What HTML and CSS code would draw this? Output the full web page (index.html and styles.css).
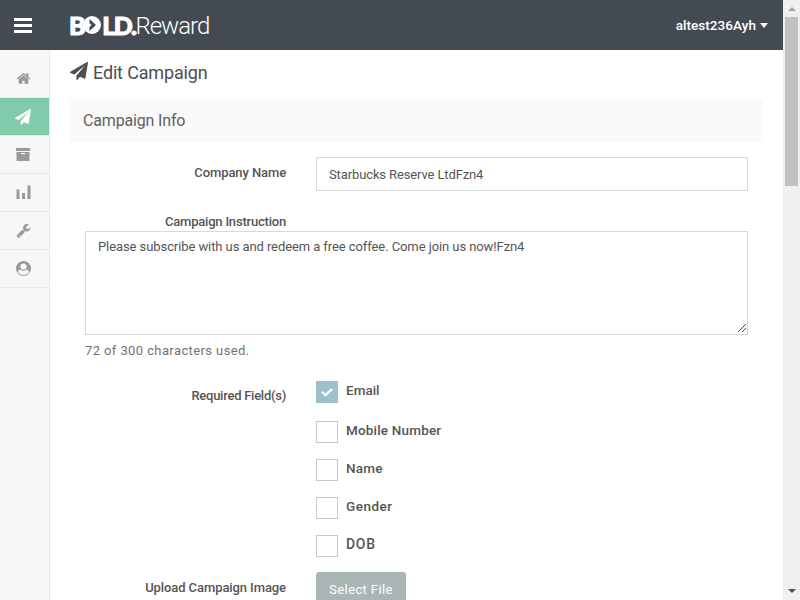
FILE: index.html
```
<!DOCTYPE html>
<html lang="en">
<head>
<meta charset="utf-8">
<title>Edit Campaign</title>
<link rel="stylesheet" href="styles.css">
</head>
<body>
<svg class="defs" width="0" height="0"><symbol id="plane" viewBox="0 0 1792 1792"><path d="M1764 11q33 24 27 64l-256 1536q-5 29-32 45-14 8-31 8-11 0-24-5l-453-185-242 295q-18 23-49 23-13 0-22-4-19-7-30.500-23.500t-11.500-36.500v-349l864-1059-1069 925-395-162q-37-14-40-55-2-40 32-59l1664-960q15-9 32-9 20 0 36 11z"/></symbol></svg>
<div class="app">
  <header class="topbar">
    <div class="burger"><i></i><i></i><i></i></div>
    <div class="logo"><b class="b">B</b><svg class="o" viewBox="0 0 18 18"><circle cx="9" cy="9" r="9" fill="#fff"/><path d="M6.500 3 13 9 6.500 15V11L8.500 9 6.500 7Z" fill="#434a54"/></svg><b class="ld">LD.</b><span>Reward</span></div>
    <div class="user"><span>altest236Ayh</span><i class="caret"></i></div>
  </header>
  <div class="body">
    <nav class="side">
      <a class="first"><svg width="15" height="15" viewBox="0 0 1792 1792"><path d="M1472 992v480q0 26-19 45t-45 19h-384v-384h-256v384h-384q-26 0-45-19t-19-45v-480q0-1 .5-3t.5-3l575-474 575 474q1 2 1 6zm223-69l-62 74q-8 9-21 11h-3q-13 0-21-7l-692-577-692 577q-12 8-24 7-13-2-21-11l-62-74q-8-10-7-23.500t11-21.500l719-599q32-26 76-26t76 26l244 204v-195q0-14 9-23t23-9h192q14 0 23 9t9 23v408l219 182q10 8 11 21.500t-7 23.500z"/></svg></a>
      <a class="active"><svg width="16" height="16"><use href="#plane"/></svg></a>
      <a><svg width="14" height="13" viewBox="0 0 14 13"><path fill-rule="evenodd" d="M0 0h14v3H0zM.5 4h13v9H.5zM5 5v1.300h4V5z"/></svg></a>
      <a><svg width="15" height="15" viewBox="0 0 15 15"><path d="M.5 4.500h3V14h-3zM6 8h3v6H6zM11.500.5h3V14h-3z"/></svg></a>
      <a><svg width="15" height="15" viewBox="0 0 1792 1792"><path d="M448 1472q0-26-19-45t-45-19-45 19-19 45 19 45 45 19 45-19 19-45zm644-420l-682 682q-37 37-90 37-52 0-91-37l-106-108q-38-36-38-90 0-53 38-91l681-681q39 98 114.500 173.500t173.500 114.500zm634-435q0 39-23 106-47 134-164.500 217.500t-258.500 83.500q-185 0-316.500-131.500t-131.500-316.500 131.500-316.500 316.500-131.500q58 0 121.500 16.500t107.500 46.500q16 11 16 28t-16 28l-293 169v224l193 107q5-3 79-48.500t135.500-81 70.500-35.500q15 0 23.500 10t8.500 25z"/></svg></a>
      <a><svg width="15" height="15" viewBox="0 0 15 15"><circle cx="7.500" cy="7.500" r="7.500"/><path fill="#f7f7f7" d="M2 11.200c.4-1.700 1.300-2.600 2.500-2.800a4.200 4.200 0 0 0 6 0c1.200.2 2.100 1.100 2.500 2.800a6.600 6.600 0 0 1-11 0z"/><circle fill="#f7f7f7" cx="7.500" cy="5.600" r="3.100"/></svg></a>
    </nav>
    <main class="content">
      <h1><svg width="18" height="18"><use href="#plane"/></svg><span>Edit Campaign</span></h1>
      <h2>Campaign Info</h2>
      <div class="row company"><label class="lab l1">Company Name</label><div class="input">Starbucks Reserve LtdFzn4</div></div>
      <div class="row"><label class="lab l2">Campaign Instruction</label></div>
      <div class="area"><span>Please subscribe with us and redeem a free coffee. Come join us now!Fzn4</span><svg class="grip" width="9" height="9" viewBox="0 0 9 9" shape-rendering="crispEdges"><path d="M.5 8.500 8.500.5M4.500 8.500l4-4" stroke="#444"/></svg></div>
      <p class="count">72 of 300 characters used.</p>
      <div class="row fields"><label class="lab l3">Required Field(s)</label>
        <div class="checks">
          <div class="check on"><i><svg width="12" height="9" viewBox="0 0 12 9"><path d="M1 3.800 4.500 7.200 11 1" fill="none" stroke="#fff" stroke-width="2.300"/></svg></i><span class="c1">Email</span></div>
          <div class="check"><i></i><span class="c2">Mobile Number</span></div>
          <div class="check"><i></i><span class="c3">Name</span></div>
          <div class="check"><i></i><span class="c4">Gender</span></div>
          <div class="check"><i></i><span class="c5">DOB</span></div>
        </div>
      </div>
      <div class="row upload"><label class="lab l4">Upload Campaign Image</label><div class="btn">Select File</div></div>
    </main>
  </div>
</div>
<div class="scroll"><i class="up"></i><i class="thumb"></i><i class="down"></i></div>
</body>
</html>
```
FILE: styles.css
```
* { box-sizing: border-box; }
html, body { margin: 0; height: 600px; overflow: hidden; }
body { display: flex; background: #fff; color: #555; font: 13px/20px Roboto, "Liberation Sans", sans-serif; }
svg { display: block; fill: currentColor; flex: none; }
.defs { position: absolute; }
.app { width: 783px; height: 600px; overflow: hidden; }
.topbar { height: 50px; background: #434a54; display: flex; align-items: center; color: #fff; padding: 0 15px 0 14px; }
.burger { width: 18px; display: grid; gap: 3px; }
.burger i { height: 3px; background: #fff; }
.logo { display: flex; align-items: center; margin-left: 37px; height: 50px; font: 24px/50px Roboto, sans-serif; white-space: nowrap; }
.logo b { font: 900 25px/50px Lato, Roboto, sans-serif; letter-spacing: -1.300px; -webkit-text-stroke: 1px #fff; }
.logo .b { margin-right: -1px; }
.logo .ld { margin-left: 1px; letter-spacing: -1.500px; }
.logo .o { width: 18px; height: 18px; }
.logo span { font-weight: 300; letter-spacing: -1px; margin-top: 1px; }
.user { margin-left: auto; display: flex; align-items: center; gap: 4px; font-size: 13.500px; font-weight: 500; letter-spacing: .06px; }
.caret { border: 4px solid transparent; border-top: 5px solid #fff; border-bottom: 0; }
.body { display: flex; height: 550px; }
.side { width: 50px; background: #f7f7f7; border-right: 1px solid #e8e8e8; color: #999; }
.side a { display: flex; height: 38px; border-bottom: 1px solid #e8e8e8; align-items: center; justify-content: center; padding-right: 3px; }
.side .first { height: 48px; padding-top: 10px; }
.side .active { background: #7fcbab; color: #fff; }
.content { width: 713px; padding: 0 0 0 20px; }
h1 { margin: 0; height: 49px; padding-top: 12px; display: flex; gap: 5px; font: 400 18px/21px Roboto, sans-serif; letter-spacing: -.16px; color: #4b4e53; }
h2 { margin: 0; height: 43px; background: #fafafa; border-radius: 3px; padding-left: 13px; font: 400 16px/44px Roboto, sans-serif; letter-spacing: -.16px; color: #606060; }
.row { display: flex; }
.lab { width: 216px; margin-right: 30px; text-align: right; font-weight: 500; white-space: nowrap; }
.l1 { letter-spacing: -.1px; }
.l2 { letter-spacing: -.2px; }
.l3 { letter-spacing: -.25px; }
.l4 { letter-spacing: -.09px; }
.company { margin-top: 15px; height: 55px; }
.company .lab { padding-top: 6px; }
.input { width: 432px; height: 34px; border: 1px solid #d9d9d9; padding-left: 12px; line-height: 33px; letter-spacing: -.12px; }
.area { position: relative; width: 663px; height: 104px; margin: -1px 0 0 15px; border: 1px solid #d9d9d9; padding: 5px 12px; white-space: nowrap; letter-spacing: -.083px; }
.grip { position: absolute; right: 1px; bottom: 1px; }
.count { margin: 6px 0 0 15px; color: #737373; letter-spacing: .4px; }
.fields { margin-top: 20px; }
.fields .lab { padding-top: 5px; }
.check { display: flex; height: 38px; gap: 8px; line-height: 20px; font-size: 13.500px; font-weight: 500; }
.check span { margin-top: -1px; }
.c2 { letter-spacing: .18px; }
.c3 { letter-spacing: .25px; }
.c4 { letter-spacing: .5px; }
.c5 { font-size: 14px; letter-spacing: .7px; }
.check.on { height: 40px; }
.check i { width: 22px; height: 22px; border: 1px solid #ccc8c0; }
.check.on i { background: #9bc1cc; border: 0; display: grid; place-items: center; }
.upload { margin-top: -1px; }
.upload .lab { padding-top: 6px; }
.btn { width: 90px; height: 34px; background: #aab6b6; color: #fff; border-radius: 3px 3px 0 0; text-align: center; line-height: 35px; letter-spacing: .38px; }
.scroll { width: 17px; height: 600px; background: #f0f0f0; display: flex; flex-direction: column; align-items: center; }
.up { margin-top: 7px; border: 4px solid transparent; border-bottom-color: #a3a3a3; border-top: 0; }
.thumb { margin-top: 6px; width: 13px; height: 169px; background: #c1c1c1; }
.down { margin: auto 0 7px; border: 4px solid transparent; border-top-color: #505050; border-bottom: 0; }
```
